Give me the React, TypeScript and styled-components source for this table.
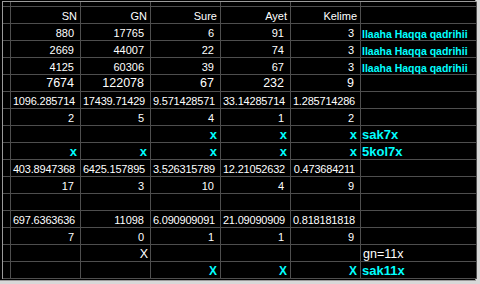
import React from "react";
import styled, { createGlobalStyle, css } from "styled-components";

const Global = createGlobalStyle`
  html, body {
    margin: 0;
    padding: 0;
    background: #d8d8d8;
  }
  body {
    width: 480px;
    height: 284px;
    overflow: hidden;
  }
`;

type Kind = "hdr" | "num" | "dec" | "big" | "x" | "X" | "Xw" | "verse" | "tag" | "note" | "";

const Frame = styled.div`
  width: 476px;
  height: 281px;
  background: #000;
  padding: 1px 0 0 2px;
  box-sizing: border-box;
  border-right: 1px solid #9a9a9a;
  border-bottom: 1px solid #9a9a9a;
`;

const Sheet = styled.div`
  display: grid;
  grid-template-columns: 7px repeat(5, 69px) 115px;
  grid-template-rows: 4px repeat(16, 16px);
  gap: 1px;
  padding: 0 1px 1px 0;
  background: #4e4e4e;
  border-left: 1px solid #9a9a9a;
  border-top: 1px solid #9a9a9a;
  width: max-content;
`;

const narrow = css`
  font-size: 12.5px;
  color: #fff;
`;

const kinds = {
  hdr: css`
    justify-content: flex-end;
    padding-right: 3px;
    font-size: 11px;
    color: #fff;
  `,
  num: css`
    justify-content: flex-end;
    padding-right: 6px;
    font-size: 11px;
    color: #fff;
  `,
  dec: css`
    justify-content: flex-end;
    padding-right: 5px;
    font-size: 11px;
    letter-spacing: -0.2px;
    color: #fff;
  `,
  big: css`
    justify-content: flex-end;
    padding-right: 6px;
    padding-bottom: 2px;
    ${narrow}
  `,
  x: css`
    justify-content: flex-end;
    padding-right: 3px;
    font-size: 13px;
    font-weight: bold;
    color: #00ffff;
  `,
  X: css`
    justify-content: flex-end;
    padding-right: 3px;
    font-size: 12px;
    font-weight: bold;
    color: #00ffff;
  `,
  Xw: css`
    justify-content: flex-end;
    padding-right: 2px;
    ${narrow}
  `,
  verse: css`
    padding-left: 1px;
    font-size: 10.5px;
    font-weight: bold;
    color: #00ffff;
  `,
  tag: css`
    padding-left: 1px;
    font-size: 13px;
    font-weight: bold;
    color: #00ffff;
  `,
  note: css`
    padding-left: 2px;
    ${narrow}
  `,
  "": css``,
};

const Cell = styled.div<{ $kind: Kind }>`
  background: #000;
  display: flex;
  align-items: flex-end;
  padding-bottom: 1px;
  box-sizing: border-box;
  overflow: hidden;
  white-space: nowrap;
  font-family: "Liberation Sans", Arial, sans-serif;
  line-height: 1;
  ${(p) => kinds[p.$kind]}
`;

type Row = [Kind, string][];

const n = (v: string): [Kind, string] => [v.includes(".") ? "dec" : "num", v];
const b = (v: string): [Kind, string] => ["big", v];
const x: [Kind, string] = ["x", "x"];
const blank: [Kind, string] = ["", ""];
const verse: [Kind, string] = ["verse", "Ilaaha Haqqa qadrihii"];

const rows: Row[] = [
  [["hdr", "SN"], ["hdr", "GN"], ["hdr", "Sure"], ["hdr", "Ayet"], ["hdr", "Kelime"], blank],
  [n("880"), n("17765"), n("6"), n("91"), n("3"), verse],
  [n("2669"), n("44007"), n("22"), n("74"), n("3"), verse],
  [n("4125"), n("60306"), n("39"), n("67"), n("3"), verse],
  [b("7674"), b("122078"), b("67"), b("232"), b("9"), blank],
  [n("1096.285714"), n("17439.71429"), n("9.571428571"), n("33.14285714"), n("1.285714286"), blank],
  [n("2"), n("5"), n("4"), n("1"), n("2"), blank],
  [blank, blank, x, x, x, ["tag", "sak7x"]],
  [x, x, x, x, x, ["tag", "5kol7x"]],
  [n("403.8947368"), n("6425.157895"), n("3.526315789"), n("12.21052632"), n("0.473684211"), blank],
  [n("17"), n("3"), n("10"), n("4"), n("9"), blank],
  [blank, blank, blank, blank, blank, blank],
  [n("697.6363636"), n("11098"), n("6.090909091"), n("21.09090909"), n("0.818181818"), blank],
  [n("7"), n("0"), n("1"), n("1"), n("9"), blank],
  [blank, ["Xw", "X"], blank, blank, blank, ["note", "gn=11x"]],
  [blank, blank, ["X", "X"], ["X", "X"], ["X", "X"], ["tag", "sak11x"]],
];

export default function App() {
  return (
    <>
      <Global />
      <Frame>
        <Sheet>
          {Array.from({ length: 7 }).map((_, i) => (
            <Cell key={"top" + i} $kind="" />
          ))}
          {rows.map((row, r) => (
            <React.Fragment key={r}>
              <Cell $kind="" />
              {row.map(([kind, text], c) => (
                <Cell key={c} $kind={kind}>
                  {text}
                </Cell>
              ))}
            </React.Fragment>
          ))}
        </Sheet>
      </Frame>
    </>
  );
}
